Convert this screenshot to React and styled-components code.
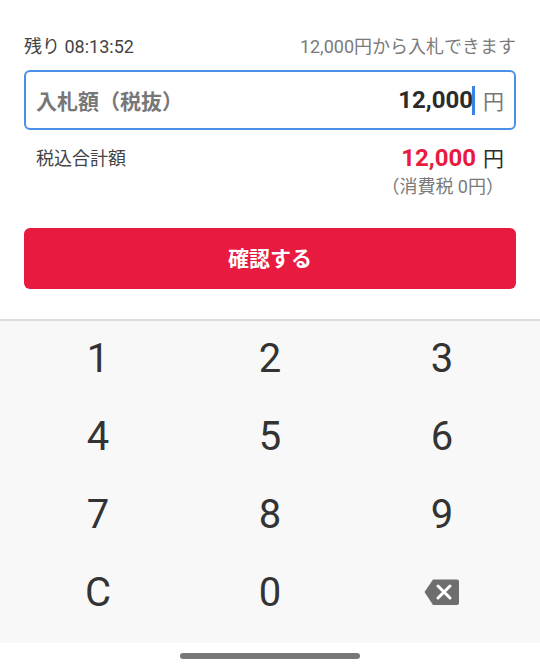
import React from "react";
import styled, { createGlobalStyle } from "styled-components";

const GlobalStyle = createGlobalStyle`
  html, body {
    margin: 0;
    padding: 0;
    background: #fff;
  }
  body {
    font-family: Roboto, "Noto Sans CJK JP", sans-serif;
  }
`;

const Page = styled.div`
  width: 540px;
  height: 668px;
  display: flex;
  flex-direction: column;
  overflow: hidden;
  background: #fff;
`;

const Form = styled.div`
  height: 319px;
  box-sizing: border-box;
  padding: 34px 24px 0;
`;

const InfoRow = styled.div`
  display: flex;
  justify-content: space-between;
  align-items: center;
  height: 22px;
  font-size: 18px;
`;

const Remaining = styled.span`
  color: #444;
`;

const MinBid = styled.span`
  color: #7a7a7a;
`;

const InputBox = styled.div`
  display: flex;
  align-items: center;
  justify-content: space-between;
  box-sizing: border-box;
  height: 60px;
  margin-top: 14px;
  padding: 0 10px 0 10px;
  border: 2px solid #4a90e8;
  border-radius: 6px;
`;

const InputLabel = styled.span`
  font-size: 21px;
  font-weight: 700;
  color: #777;
`;

const InputValue = styled.span`
  display: flex;
  align-items: center;
  font-size: 24px;
  font-weight: 700;
  color: #2b2b2b;
`;

const Caret = styled.i`
  width: 3px;
  height: 29px;
  margin-left: -1px;
  background: #3b82e6;
`;

const Unit = styled.span`
  margin-left: ${(p) => p.$gap}px;
  font-size: 21px;
  font-weight: 400;
  color: ${(p) => p.$color};
`;

const TotalRow = styled.div`
  display: flex;
  justify-content: space-between;
  padding: 14px 12px 0 12px;
`;

const TotalLabel = styled.span`
  font-size: 18px;
  line-height: 30px;
  color: #444;
`;

const TotalAmount = styled.div`
  display: flex;
  flex-direction: column;
  align-items: flex-end;
`;

const TotalValue = styled.span`
  font-size: 24px;
  line-height: 28px;
  font-weight: 700;
  color: #e91a3f;
`;

const Tax = styled.span`
  font-size: 18px;
  line-height: 28px;
  color: #7a7a7a;
`;

const ConfirmButton = styled.button`
  display: block;
  width: 100%;
  height: 61px;
  margin-top: 27px;
  padding: 0 0 3px;
  border: 0;
  border-radius: 6px;
  background: #e91a3f;
  color: #fff;
  font-family: inherit;
  font-size: 21px;
  font-weight: 700;
`;

const Keypad = styled.div`
  height: 324px;
  box-sizing: border-box;
  border-top: 2px solid #ddd;
  background: #f8f8f8;
  display: grid;
  grid-template-columns: 196px 148px 196px;
  grid-auto-rows: 78px;
`;

const Key = styled.div`
  display: flex;
  align-items: center;
  justify-content: center;
  height: 74px;
  font-size: 40px;
  font-weight: 400;
  color: #333;
`;

const NavBar = styled.div`
  flex: 1;
  display: flex;
  justify-content: center;
  align-items: center;
  background: #fff;
`;

const NavPill = styled.div`
  width: 180px;
  height: 6px;
  border-radius: 3px;
  background: #777;
`;

const BackspaceIcon = () => (
  <svg width="36" height="28" viewBox="0 0 36 28">
    <path d="M9 1.5H33a2 2 0 0 1 2 2V25a2 2 0 0 1-2 2H9L0.5 14Z" fill="#6e6e6e" />
    <path d="M14 8L26 20M26 8L14 20" stroke="#fff" strokeWidth="3" strokeLinecap="round" />
  </svg>
);

const keys = ["1", "2", "3", "4", "5", "6", "7", "8", "9", "C", "0"];

export default function App() {
  return (
    <Page>
      <GlobalStyle />
      <Form>
        <InfoRow>
          <Remaining>残り 08:13:52</Remaining>
          <MinBid>12,000円から入札できます</MinBid>
        </InfoRow>
        <InputBox>
          <InputLabel>入札額（税抜）</InputLabel>
          <InputValue>
            12,000
            <Caret />
            <Unit $gap={8} $color="#777">円</Unit>
          </InputValue>
        </InputBox>
        <TotalRow>
          <TotalLabel>税込合計額</TotalLabel>
          <TotalAmount>
            <TotalValue>
              12,000
              <Unit $gap={7} $color="#2b2b2b">円</Unit>
            </TotalValue>
            <Tax>（消費税 0円）</Tax>
          </TotalAmount>
        </TotalRow>
        <ConfirmButton>確認する</ConfirmButton>
      </Form>
      <Keypad>
        {keys.map((k) => (
          <Key key={k}>{k}</Key>
        ))}
        <Key>
          <BackspaceIcon />
        </Key>
      </Keypad>
      <NavBar>
        <NavPill />
      </NavBar>
    </Page>
  );
}
